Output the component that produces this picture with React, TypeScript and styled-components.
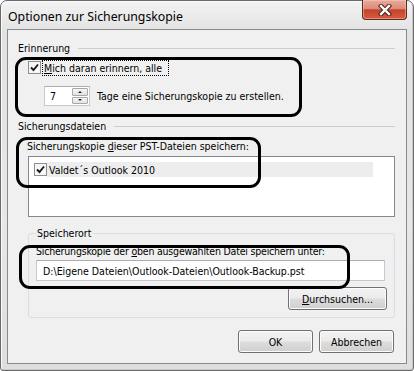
import React from "react";
import styled, { createGlobalStyle } from "styled-components";

const uiFont = `"DejaVu Sans Condensed", "DejaVu Sans", sans-serif`;
const titleFont = `"Noto Sans", "Open Sans", sans-serif`;

const GlobalStyle = createGlobalStyle`
  html, body { margin: 0; padding: 0; background: #ffffff; }
  body { width: 414px; height: 371px; overflow: hidden; }
`;

const Window = styled.div`
  position: relative;
  width: 414px;
  height: 371px;
  box-sizing: border-box;
  border: 1px solid #6a6a6a;
  border-radius: 7px 7px 3px 3px;
  background: linear-gradient(to bottom, #f2f2f2 0%, #e2e2e2 9%, #e7e7e7 60%, #dedede 100%);
  box-shadow: inset 1px 1px 0 #fbfbfb, inset -1px -1px 0 #cacaca;
  display: flex;
  flex-direction: column;
  font-family: ${uiFont};
  font-size: 10.5px;
  color: #000;
`;

const TitleBar = styled.div`
  height: 28px;
  display: flex;
  align-items: center;
  justify-content: space-between;
  padding: 0 6px 0 7px;
`;

const Title = styled.div`
  font-family: ${titleFont};
  font-size: 12.3px;
  color: #000;
  margin-top: 2px;
`;

const CloseButton = styled.div`
  align-self: flex-start;
  margin-top: -1px;
  width: 45px;
  height: 20px;
  box-sizing: border-box;
  border: 1px solid #5c2a20;
  border-top: none;
  border-radius: 0 0 4px 4px;
  background: linear-gradient(to bottom, #e9aa9c 0%, #dd8b79 45%, #c4432c 52%, #d45c40 100%);
  box-shadow: inset 0 0 0 1px rgba(255, 210, 200, 0.45);
  display: flex;
  align-items: center;
  justify-content: center;
`;

const Client = styled.div`
  flex: 1;
  margin: 0 6px 6px 6px;
  border: 1px solid #8a8a8a;
  background: #f0f0f0;
  padding: 0 11px 0 10px;
  display: flex;
  flex-direction: column;
`;

const SectionHeader = styled.div<{ $top: number }>`
  margin-top: ${(p) => p.$top}px;
  height: 14px;
  display: flex;
  align-items: center;
  gap: 8px;
  &::after {
    content: "";
    flex: 1;
    height: 1px;
    background: #c9ced3;
  }
`;

const Row = styled.div<{ $top: number; $left: number; $h: number }>`
  margin-top: ${(p) => p.$top}px;
  margin-left: ${(p) => p.$left}px;
  height: ${(p) => p.$h}px;
  display: flex;
  align-items: center;
`;

const Check = styled.div`
  width: 13px;
  height: 13px;
  flex: none;
  box-sizing: border-box;
  border: 1px solid #8e8f8f;
  background: linear-gradient(135deg, #f0f0f0, #ffffff);
  box-shadow: inset 0 0 0 1px #f6f6f6;
  display: flex;
  align-items: center;
  justify-content: center;
`;

const FocusLabel = styled.span`
  margin-left: 2px;
  padding: 0 6px 0 1px;
  outline: 1px dotted #000;
  outline-offset: 0;
  line-height: 14px;
`;

const SpinBox = styled.div`
  width: 46px;
  height: 20px;
  box-sizing: border-box;
  border: 1px solid #c4c8cf;
  border-top-color: #abadb3;
  background: #fff;
  display: flex;
  align-items: stretch;
`;

const SpinValue = styled.div`
  flex: 1;
  padding-left: 5px;
  display: flex;
  align-items: center;
`;

const SpinButtons = styled.div`
  width: 16px;
  display: flex;
  flex-direction: column;
  gap: 1px;
  padding: 1px 1px 1px 0;
`;

const SpinButton = styled.div`
  flex: 1;
  box-sizing: border-box;
  border: 1px solid #a8a8a8;
  border-radius: 1px;
  background: linear-gradient(to bottom, #f6f6f6, #e3e3e3);
  display: flex;
  align-items: center;
  justify-content: center;
`;

const Arrow = styled.div<{ $up?: boolean }>`
  width: 0;
  height: 0;
  border-left: 2px solid transparent;
  border-right: 2px solid transparent;
  ${(p) => (p.$up ? "border-bottom: 2px solid #222;" : "border-top: 2px solid #222;")}
`;

const RowText = styled.span<{ $gap: number }>`
  margin-left: ${(p) => p.$gap}px;
  line-height: 14px;
`;

const ListBox = styled.div`
  margin-top: 3px;
  margin-left: 10px;
  height: 61px;
  flex: none;
  box-sizing: border-box;
  border: 1px solid #828790;
  background: #fff;
  padding: 5px 21px 0 5px;
`;

const ListItem = styled.div`
  display: flex;
  align-items: center;
  height: 15px;
`;

const ListItemText = styled.div`
  flex: 1;
  height: 15px;
  background: #ededed;
  padding-left: 2px;
  display: flex;
  align-items: center;
`;

const Group = styled.div`
  margin: 16px 0 0 10px;
  padding: 0 9px 7px 7px;
  border: 1px solid #d5dfe5;
  border-radius: 3px;
  display: flex;
  flex-direction: column;
`;

const Legend = styled.div`
  align-self: flex-start;
  margin: -8px 0 0 0;
  padding: 0 2px 0 1px;
  background: #f0f0f0;
  line-height: 14px;
`;

const GroupLabel = styled.div`
  margin-top: 4px;
  line-height: 14px;
  letter-spacing: -0.2px;
`;

const TextInput = styled.div`
  margin-top: 2px;
  height: 21px;
  box-sizing: border-box;
  border: 1px solid #c4c8cf;
  border-top-color: #abadb3;
  background: #fff;
  padding-left: 6px;
  display: flex;
  align-items: center;
`;

const ButtonRow = styled.div<{ $top: number; $right: number }>`
  margin-top: ${(p) => p.$top}px;
  margin-right: ${(p) => p.$right}px;
  display: flex;
  justify-content: flex-end;
  gap: 6px;
`;

const Button = styled.div<{ $w: number }>`
  width: ${(p) => p.$w}px;
  height: 23px;
  box-sizing: border-box;
  border: 1px solid #707070;
  border-radius: 3px;
  background: linear-gradient(to bottom, #f2f2f2 0%, #ebebeb 48%, #dddddd 52%, #cfcfcf 100%);
  box-shadow: inset 0 0 0 1px #fcfcfc;
  display: flex;
  align-items: center;
  justify-content: center;
`;

const U = styled.span`
  text-decoration: underline;
  text-underline-offset: 1px;
`;

const Annotation = styled.div<{ $x: number; $y: number; $w: number; $h: number }>`
  position: absolute;
  left: ${(p) => p.$x}px;
  top: ${(p) => p.$y}px;
  width: ${(p) => p.$w}px;
  height: ${(p) => p.$h}px;
  box-sizing: border-box;
  border: 3px solid #000;
  border-radius: 11px;
  pointer-events: none;
`;

const CheckMark = () => (
  <svg width="9" height="9" viewBox="0 0 9 9">
    <path d="M1 4.5 L3.5 7 L8 1.5" fill="none" stroke="#1a1a1a" strokeWidth="1.9" />
  </svg>
);

const CloseGlyph = () => (
  <svg width="14" height="12" viewBox="0 0 14 12">
    <path d="M3 2 L11 10 M11 2 L3 10" stroke="#4a1e16" strokeWidth="4.4" strokeLinecap="square" />
    <path d="M3 2 L11 10 M11 2 L3 10" stroke="#ffffff" strokeWidth="2.4" strokeLinecap="square" />
  </svg>
);

export default function App() {
  return (
    <>
      <GlobalStyle />
      <Window>
        <TitleBar>
          <Title>Optionen zur Sicherungskopie</Title>
          <CloseButton>
            <CloseGlyph />
          </CloseButton>
        </TitleBar>
        <Client>
          <SectionHeader $top={11}>Erinnerung</SectionHeader>
          <Row $top={5} $left={10} $h={15}>
            <Check>
              <CheckMark />
            </Check>
            <FocusLabel>
              <U>M</U>ich daran erinnern, alle
            </FocusLabel>
          </Row>
          <Row $top={11} $left={26} $h={20}>
            <SpinBox>
              <SpinValue>7</SpinValue>
              <SpinButtons>
                <SpinButton>
                  <Arrow $up />
                </SpinButton>
                <SpinButton>
                  <Arrow />
                </SpinButton>
              </SpinButtons>
            </SpinBox>
            <RowText $gap={7}>Tage eine Sicherungskopie zu erstellen.</RowText>
          </Row>
          <SectionHeader $top={13}>Sicherungsdateien</SectionHeader>
          <Row $top={6} $left={9} $h={14}>
            <span>
              Sicherungskopie <U>d</U>ieser PST-Dateien speichern:
            </span>
          </Row>
          <ListBox>
            <ListItem>
              <Check>
                <CheckMark />
              </Check>
              <ListItemText>Valdet´s Outlook 2010</ListItemText>
            </ListItem>
          </ListBox>
          <Group>
            <Legend>Speicherort</Legend>
            <GroupLabel>
              Sicherungskopie der <U>o</U>ben ausgewählten Datei speichern unter:
            </GroupLabel>
            <TextInput>D:\Eigene Dateien\Outlook-Dateien\Outlook-Backup.pst</TextInput>
            <ButtonRow $top={6} $right={-2}>
              <Button $w={99}>
                <span>
                  <U>D</U>urchsuchen...
                </span>
              </Button>
            </ButtonRow>
          </Group>
          <ButtonRow $top={12} $right={1}>
            <Button $w={75}>OK</Button>
            <Button $w={75}>Abbrechen</Button>
          </ButtonRow>
        </Client>
        <Annotation $x={14} $y={56} $w={287} $h={60} />
        <Annotation $x={15} $y={136} $w={245} $h={51} />
        <Annotation $x={18} $y={244} $w={331} $h={44} />
      </Window>
    </>
  );
}
